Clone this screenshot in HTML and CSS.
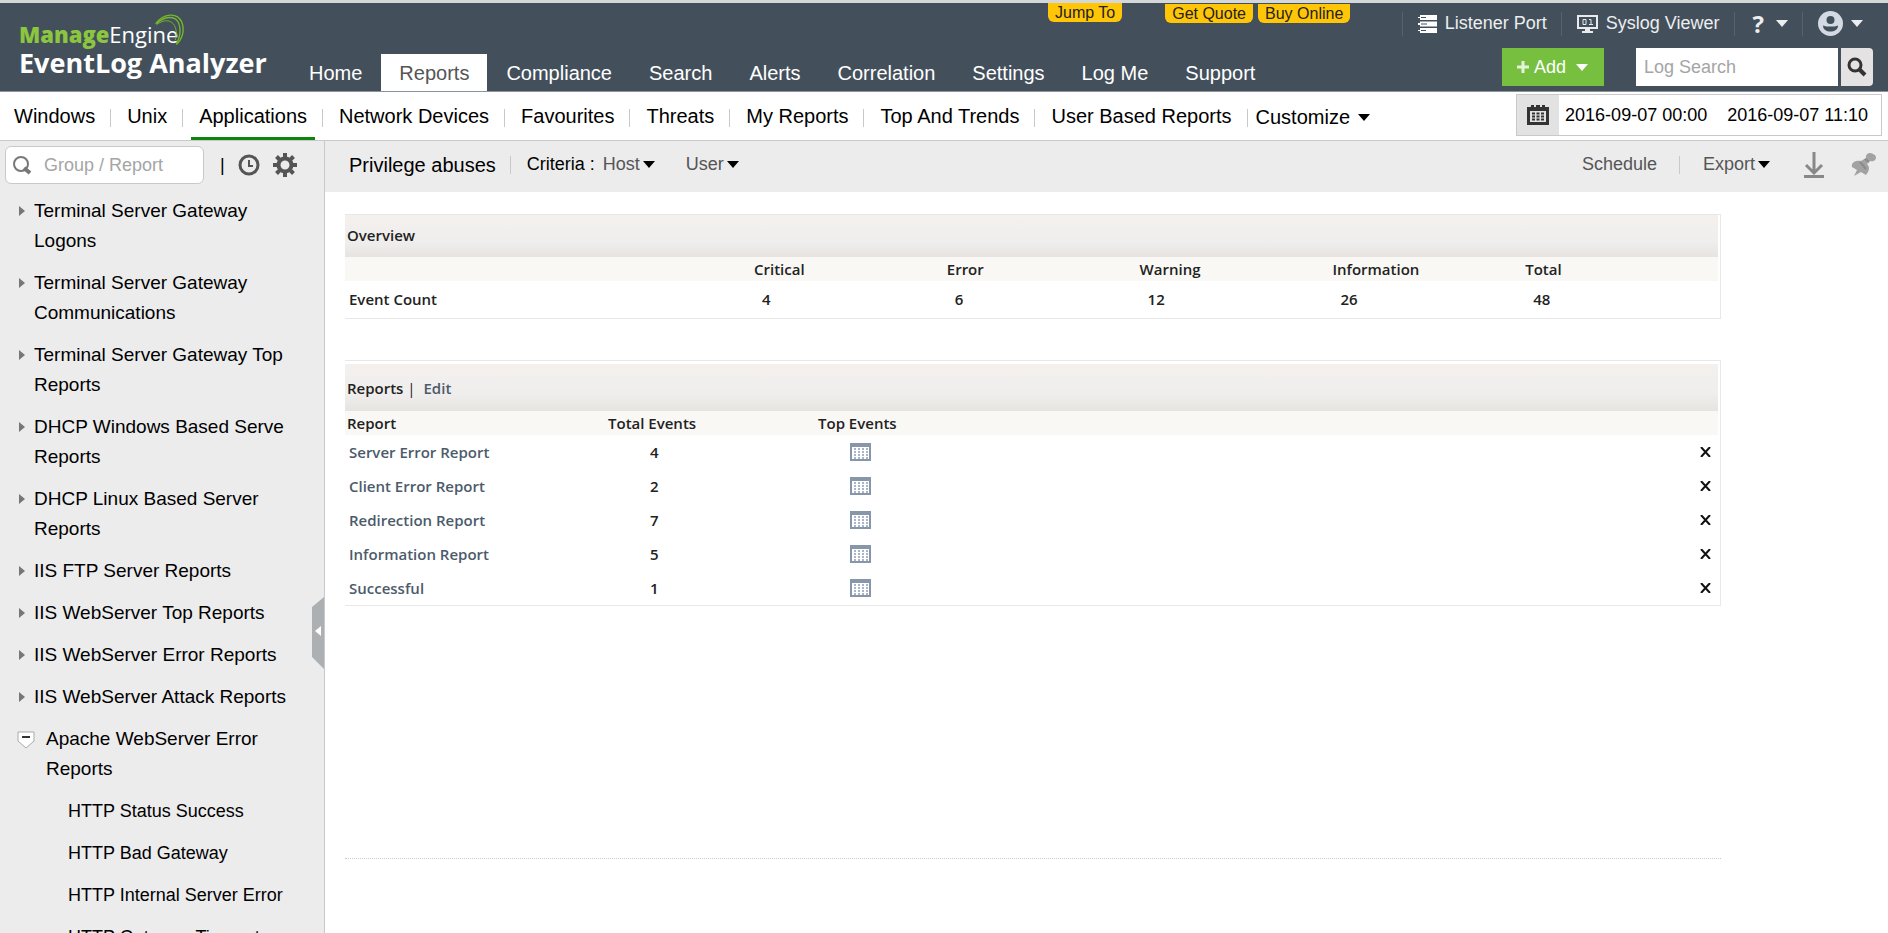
FILE: index.html
```html
<!DOCTYPE html>
<html lang="en">
<head>
    <meta charset="UTF-8">
    <meta name="viewport" content="width=device-width, initial-scale=1.0">
    <title>ManageEngine EventLog Analyzer</title>
    <link rel="stylesheet" href="styles.css">
</head>
<body>
    <header class="header">
        <div class="logo">
            <div class="logo-brand"><span>Manage</span>Engine
                <svg class="logo-arc" viewBox="0 0 34 40" aria-hidden="true">
                    <path d="M1 12C10 0 25-1 30 10c4 10 0 20-6 25" fill="none" stroke="#76b82a" stroke-width="1.500"/>
                    <path d="M2 12C11 3 22 3 26 10c4 8 2 18-2 24" fill="none" stroke="#76b82a" stroke-width="1.500"/>
                    <path d="M2 13c8-6 16-6 20 1 3 6 2 11 1 16" fill="none" stroke="#76b82a" stroke-width="1"/>
                </svg>
            </div>
            <div class="logo-product">EventLog Analyzer</div>
        </div>

        <nav class="main-nav">
            <a href="#">Home</a>
            <a href="#" class="active">Reports</a>
            <a href="#">Compliance</a>
            <a href="#">Search</a>
            <a href="#">Alerts</a>
            <a href="#">Correlation</a>
            <a href="#">Settings</a>
            <a href="#">Log Me</a>
            <a href="#">Support</a>
        </nav>

        <div class="promo">
            <button class="jump">Jump To</button>
            <button>Get Quote</button>
            <button>Buy Online</button>
        </div>

        <div class="header-right">
            <div class="tools">
                <a href="#">
                    <svg width="19" height="18" viewBox="0 0 19 18" aria-hidden="true">
                        <path d="M2 0h17v5H2V3H0V2h2zM2 6.500h17v5H2v-1.500H0V8h2zM2 13h17v5H2v-2H0v-1h2z" fill="#fff"/>
                        <path d="M3 2.500h5M3 9h6M3 15.500h5" stroke="#43505c"/>
                    </svg>
                    Listener Port
                </a>
                <a href="#">
                    <svg width="21" height="18" viewBox="0 0 21 18" aria-hidden="true">
                        <path d="M1 1h19v12H1z" fill="none" stroke="#e8eaec" stroke-width="2"/>
                        <path d="M8 13h5v3h3v2H5v-2h3z" fill="#e8eaec"/>
                        <path d="M6 4.500h3v5H6zM12 4.500h2v5M12 9.500h4" fill="none" stroke="#e8eaec"/>
                    </svg>
                    Syslog Viewer
                </a>
                <button class="help" aria-label="Help">?<i class="caret"></i></button>
                <button class="user" aria-label="Account">
                    <svg width="25" height="25" viewBox="0 0 25 25" aria-hidden="true">
                        <circle cx="12.500" cy="12.500" r="12.500" fill="#d3dae3"/>
                        <circle cx="12.500" cy="9" r="4" fill="#43505c"/>
                        <path d="M5 14.500c2 1 5 1 7.500 1s5.500 0 7.500-1c0 4-3.500 6-7.500 6s-7.500-2-7.500-6z" fill="#43505c"/>
                    </svg>
                    <i class="caret"></i>
                </button>
            </div>
            <div class="actions">
                <button class="add-btn"><svg width="12" height="12" viewBox="0 0 12 12" aria-hidden="true"><path d="M6 0v12M0 6h12" stroke="#e6f3dc" stroke-width="3"/></svg>Add<i class="caret"></i></button>
                <form class="log-search">
                    <input type="text" placeholder="Log Search" aria-label="Log Search">
                    <button type="button" aria-label="Search">
                        <svg width="20" height="20" viewBox="0 0 20 20" aria-hidden="true"><circle cx="8" cy="8" r="6" fill="none" stroke="#333" stroke-width="3"/><path d="M12 12l6 6" stroke="#333" stroke-width="4"/></svg>
                    </button>
                </form>
            </div>
        </div>
    </header>

    <div class="sub-nav">
        <nav>
            <a href="#">Windows</a>
            <a href="#">Unix</a>
            <a href="#" class="active">Applications</a>
            <a href="#">Network Devices</a>
            <a href="#">Favourites</a>
            <a href="#">Threats</a>
            <a href="#">My Reports</a>
            <a href="#">Top And Trends</a>
            <a href="#">User Based Reports</a>
            <button class="customize">Customize<i class="caret"></i></button>
        </nav>
        <div class="date-range">
            <button aria-label="Calendar">
                <svg width="22" height="20" viewBox="0 0 22 20" aria-hidden="true">
                    <path d="M0 2h4V0h3v2h2V0h4v2h2V0h3v2h4v18H0z" fill="#333"/>
                    <path d="M3 6h16v11H3z" fill="#e2e2e2"/>
                    <path d="M5 8.500h12M5 11.500h12M5 14.500h12" stroke="#333" stroke-width="2" stroke-dasharray="3 1.500"/>
                </svg>
            </button>
            <span>2016-09-07 00:00</span>
            <span>2016-09-07 11:10</span>
        </div>
    </div>

    <div class="layout">
        <aside class="sidebar">
            <div class="sidebar-tools">
                <label class="group-search">
                    <svg width="19" height="20" viewBox="0 0 19 20" aria-hidden="true"><circle cx="8" cy="9" r="7" fill="none" stroke="#777" stroke-width="2"/><path d="M11 13l6 5" stroke="#777" stroke-width="4"/></svg>
                    <input type="text" placeholder="Group / Report" aria-label="Group / Report">
                </label>
                <span class="bar">|</span>
                <button aria-label="Schedules">
                    <svg width="22" height="22" viewBox="0 0 22 22" aria-hidden="true"><circle cx="11" cy="11" r="9" fill="none" stroke="#555" stroke-width="3"/><path d="M11 6v6h4" fill="none" stroke="#555" stroke-width="2"/></svg>
                </button>
                <button aria-label="Manage reports">
                    <svg width="24" height="24" viewBox="0 0 24 24" aria-hidden="true"><circle cx="12" cy="12" r="6.500" fill="none" stroke="#555" stroke-width="4"/><path d="M12 0v4M12 20v4M0 12h4M20 12h4M3.500 3.500l3 3M17.500 17.500l3 3M3.500 20.500l3-3M17.500 6.500l3-3" stroke="#555" stroke-width="4"/></svg>
                </button>
            </div>
            <ul class="tree">
                <li><a href="#">Terminal Server Gateway Logons</a></li>
                <li><a href="#">Terminal Server Gateway Communications</a></li>
                <li><a href="#">Terminal Server Gateway Top Reports</a></li>
                <li><a href="#">DHCP Windows Based Serve Reports</a></li>
                <li><a href="#">DHCP Linux Based Server Reports</a></li>
                <li><a href="#">IIS FTP Server Reports</a></li>
                <li><a href="#">IIS WebServer Top Reports</a></li>
                <li><a href="#">IIS WebServer Error Reports</a></li>
                <li><a href="#">IIS WebServer Attack Reports</a></li>
                <li class="open">
                    <svg width="18" height="18" viewBox="0 0 18 18" aria-hidden="true"><path d="M1 1h16v9l-8 7-8-7z" fill="#fff" stroke="#aaa"/><path d="M5 6h8" stroke="#333" stroke-width="2"/></svg>
                    <a href="#">Apache WebServer Error Reports</a>
                    <ul>
                        <li><a href="#">HTTP Status Success</a></li>
                        <li><a href="#">HTTP Bad Gateway</a></li>
                        <li><a href="#">HTTP Internal Server Error</a></li>
                        <li><a href="#">HTTP Gateway Timeout</a></li>
                    </ul>
                </li>
            </ul>
            <button class="collapse" aria-label="Collapse sidebar">
                <svg width="12" height="72" viewBox="0 0 12 72" aria-hidden="true"><path d="M12 0v72L0 60V10z" fill="#adb0b3"/><path d="M9 29v10l-6-5z" fill="#fff"/></svg>
            </button>
        </aside>

        <main class="content">
            <div class="toolbar">
                <h1>Privilege abuses</h1>
                <span class="criteria">Criteria :</span>
                <button>Host<i class="caret"></i></button>
                <button class="by-user">User<i class="caret"></i></button>
                <div class="toolbar-right">
                    <button class="schedule">Schedule</button>
                    <button class="export">Export<i class="caret"></i></button>
                    <button aria-label="Download">
                        <svg width="22" height="26" viewBox="0 0 22 26" aria-hidden="true"><path d="M11 0v21M3 13l8 8 8-8M1 24.500h20" fill="none" stroke="#888" stroke-width="3"/></svg>
                    </button>
                    <button aria-label="Pin">
                        <svg width="26" height="26" viewBox="0 0 26 26" aria-hidden="true">
                            <path d="M15 4c1-3 4-4 7-2 3 1 4 4 2 6-2 2-4 1-5 1l-3 3c3 3 2 6 1 8l-2 3-5-3-7 4 3-6-5-3c-1-4 3-7 9-6l5-3z" fill="#a2a2a2"/>
                            <path d="M14 7l4 3M9 10l6 7" fill="none" stroke="#8a8a8a" stroke-width="2"/>
                        </svg>
                    </button>
                </div>
            </div>

            <div class="report-body">
                <section class="panel overview">
                    <h2>Overview</h2>
                    <table>
                        <thead>
                            <tr><th></th><th>Critical</th><th>Error</th><th>Warning</th><th>Information</th><th>Total</th></tr>
                        </thead>
                        <tbody>
                            <tr><th>Event Count</th><td>4</td><td>6</td><td>12</td><td>26</td><td>48</td></tr>
                        </tbody>
                    </table>
                </section>

                <section class="panel reports">
                    <h2>Reports <span>|</span> <a href="#">Edit</a></h2>
                    <table>
                        <thead>
                            <tr><th>Report</th><th>Total Events</th><th>Top Events</th><th></th></tr>
                        </thead>
                        <tbody>
                            <tr>
                                <td><a href="#">Server Error Report</a></td><td>4</td>
                                <td><a href="#" aria-label="Top events"><svg class="grid-icon" viewBox="0 0 21 18"><use href="#grid"/></svg></a></td>
                                <td><button aria-label="Remove"><svg width="11" height="10" viewBox="0 0 11 10"><use href="#cross"/></svg></button></td>
                            </tr>
                            <tr>
                                <td><a href="#">Client Error Report</a></td><td>2</td>
                                <td><a href="#" aria-label="Top events"><svg class="grid-icon" viewBox="0 0 21 18"><use href="#grid"/></svg></a></td>
                                <td><button aria-label="Remove"><svg width="11" height="10" viewBox="0 0 11 10"><use href="#cross"/></svg></button></td>
                            </tr>
                            <tr>
                                <td><a href="#">Redirection Report</a></td><td>7</td>
                                <td><a href="#" aria-label="Top events"><svg class="grid-icon" viewBox="0 0 21 18"><use href="#grid"/></svg></a></td>
                                <td><button aria-label="Remove"><svg width="11" height="10" viewBox="0 0 11 10"><use href="#cross"/></svg></button></td>
                            </tr>
                            <tr>
                                <td><a href="#">Information Report</a></td><td>5</td>
                                <td><a href="#" aria-label="Top events"><svg class="grid-icon" viewBox="0 0 21 18"><use href="#grid"/></svg></a></td>
                                <td><button aria-label="Remove"><svg width="11" height="10" viewBox="0 0 11 10"><use href="#cross"/></svg></button></td>
                            </tr>
                            <tr>
                                <td><a href="#">Successful</a></td><td>1</td>
                                <td><a href="#" aria-label="Top events"><svg class="grid-icon" viewBox="0 0 21 18"><use href="#grid"/></svg></a></td>
                                <td><button aria-label="Remove"><svg width="11" height="10" viewBox="0 0 11 10"><use href="#cross"/></svg></button></td>
                            </tr>
                        </tbody>
                    </table>
                </section>
            </div>
        </main>
    </div>

    <!-- shared row icons -->
    <svg class="symbols" aria-hidden="true">
        <symbol id="grid" viewBox="0 0 21 18">
            <path d="M1 1h19v16H1z" fill="#fff" stroke="#8796a8" stroke-width="2"/>
            <path d="M1 2.500h19" stroke="#8796a8" stroke-width="3"/>
            <path d="M5 5v11M9 5v11M13 5v11M17 5v11" stroke="#a9b5c3" stroke-width="2" stroke-dasharray="2 1"/>
        </symbol>
        <symbol id="cross" viewBox="0 0 11 10">
            <path d="M1 0l9 10M10 0L1 10" stroke="#111" stroke-width="2"/>
        </symbol>
    </svg>
</body>
</html>
```
FILE: styles.css
```css
:root {
    --header-bg: #43505c;
    --panel-grey: #ececed;
    --line: #c9c9c9;
    --green: #76bf3f;
    --yellow: #ffc507;
    --text-muted: #555;
    --link: #4c5b6b;
}

* {
    box-sizing: border-box;
    margin: 0;
    padding: 0;
}

body {
    height: 100vh;
    display: flex;
    flex-direction: column;
    overflow: hidden;
    font-family: "Liberation Sans", Arial, sans-serif;
    font-size: 18px;
    color: #000;
    background: #fff;
}

a {
    color: inherit;
    text-decoration: none;
}

button {
    border: none;
    background: none;
    font: inherit;
    color: inherit;
    cursor: pointer;
    display: flex;
    align-items: center;
    white-space: nowrap;
}

input {
    font: inherit;
    border: none;
    outline: none;
    min-width: 0;
}

ul {
    list-style: none;
}

svg {
    display: block;
    flex: none;
}

.caret {
    flex: none;
    border: 6px solid transparent;
    border-top: 7px solid currentColor;
    border-bottom: none;
}

/* Header */
.header {
    display: flex;
    flex: none;
    height: 92px;
    background: var(--header-bg);
    border-top: 3px solid #d5d8d8;
    border-bottom: 1px solid #8b949b;
    color: #fff;
}

.logo {
    width: 291px;
    padding: 17px 0 0 19px;
    font-family: "Open Sans", sans-serif;
}

.logo-brand {
    display: flex;
    font-size: 22px;
    line-height: 28px;
    position: relative;
    width: max-content;
}

.logo-brand span {
    color: #8cc63f;
    font-weight: 800;
}

.logo-arc {
    position: absolute;
    right: -9px;
    top: -7px;
    width: 34px;
    height: 36px;
}

.logo-product {
    font-size: 27px;
    font-weight: 700;
    line-height: 30px;
    white-space: nowrap;
}

.main-nav {
    display: flex;
    align-items: flex-end;
    gap: 1px;
}

.main-nav a {
    height: 37px;
    padding: 0 18px;
    font-size: 20px;
    line-height: 38px;
    white-space: nowrap;
}

.main-nav .active {
    background: #fff;
    color: var(--text-muted);
}

/* yellow tabs hang over the top edge of the header */
.promo {
    display: flex;
    gap: 5px;
    position: absolute;
    top: 3px;
    left: 1048px;
}

.promo button {
    height: 19px;
    margin-top: 1px;
    padding: 0 7px;
    background: var(--yellow);
    border-radius: 0 0 6px 6px;
    color: #222;
    font-size: 16px;
}

.promo .jump {
    margin: 0 38px 0 0;
}

.header-right {
    margin-left: auto;
    padding: 6px 15px 0 0;
    display: flex;
    flex-direction: column;
    align-items: flex-end;
    gap: 10px;
}

.tools {
    display: flex;
    align-items: center;
    height: 29px;
    color: #eceeef;
}

.tools > * {
    display: flex;
    align-items: center;
    height: 24px;
    gap: 8px;
    padding: 0 14px 0 15px;
    border-left: 1px solid #56636f;
    white-space: nowrap;
}

.tools .help {
    padding-left: 18px;
    gap: 12px;
    font-family: "Open Sans", sans-serif;
    font-size: 24px;
    font-weight: 700;
}

.tools .user {
    padding-right: 10px;
}

.actions {
    display: flex;
    gap: 32px;
    height: 38px;
}

.add-btn {
    gap: 5px;
    padding: 0 16px 0 15px;
    background: var(--green);
}

.add-btn .caret {
    margin-left: 5px;
}

.log-search {
    display: flex;
    gap: 3px;
}

.log-search input {
    width: 202px;
    padding: 0 8px;
}

input::placeholder {
    color: #a5a5a5;
    opacity: 1;
}

.log-search button {
    width: 32px;
    justify-content: center;
    background: #e4e2e3;
    border-radius: 0 4px 4px 0;
}

/* Second level navigation */
.sub-nav {
    display: flex;
    flex: none;
    justify-content: space-between;
    height: 49px;
    border-bottom: 1px solid var(--line);
}

.sub-nav nav {
    display: flex;
    align-items: center;
    font-size: 20px;
    white-space: nowrap;
}

.sub-nav nav a {
    position: relative;
    height: 48px;
    padding: 0 8px;
    margin-right: 16px;
    line-height: 49px;
}

.sub-nav nav a:first-child {
    margin-left: 6px;
}

.sub-nav nav a::after {
    content: '';
    position: absolute;
    top: 17px;
    right: -8px;
    height: 18px;
    border-right: 1px solid var(--line);
}

.sub-nav nav .active {
    border-bottom: 3px solid #0b860b;
}

.customize {
    gap: 8px;
    padding-top: 3px;
}

.date-range {
    display: flex;
    align-items: center;
    height: 42px;
    margin: 2px 6px 0 0;
    padding-right: 13px;
    gap: 20px;
    border: 1px solid var(--line);
}

.date-range button {
    width: 42px;
    height: 40px;
    margin-right: -14px;
    justify-content: center;
    background: #e2e2e2;
}

/* Layout */
.layout {
    display: flex;
    flex: 1;
    min-height: 0;
}

.sidebar {
    position: relative;
    flex: none;
    width: 325px;
    background: var(--panel-grey);
    border-right: 1px solid var(--line);
    overflow: hidden;
}

.sidebar-tools {
    display: flex;
    align-items: center;
    gap: 13px;
    padding: 5px 0 0 5px;
}

.group-search {
    display: flex;
    align-items: center;
    gap: 12px;
    width: 199px;
    height: 38px;
    padding: 0 7px;
    background: #fff;
    border: 1px solid var(--line);
    border-radius: 6px;
}

.group-search input {
    flex: 1;
}

.bar {
    margin-left: 3px;
}

.tree {
    width: 291px;
    padding-top: 12px;
    font-size: 19px;
    line-height: 30px;
}

.tree > li {
    position: relative;
    margin-bottom: 12px;
    padding-left: 34px;
}

.tree > li::before {
    content: '';
    position: absolute;
    left: 19px;
    top: 10px;
    border: 5px solid transparent;
    border-left: 6px solid #777;
    border-right: none;
}

.tree > .open {
    padding-left: 46px;
}

.tree > .open::before {
    display: none;
}

.open > svg {
    position: absolute;
    left: 17px;
    top: 7px;
}

.open ul {
    padding: 12px 0 0 22px;
    font-size: 18px;
}

.open ul li {
    margin-bottom: 12px;
    white-space: nowrap;
}

.collapse {
    position: absolute;
    right: 0;
    top: 456px;
}

.content {
    flex: 1;
    min-width: 0;
}

.toolbar {
    display: flex;
    align-items: center;
    height: 51px;
    padding: 0 11px 4px 24px;
    background: var(--panel-grey);
    color: var(--text-muted);
}

.toolbar h1 {
    padding-right: 14px;
    border-right: 1px solid var(--line);
    color: #000;
    font-size: 20px;
    font-weight: 400;
    line-height: 18px;
    white-space: nowrap;
}

.toolbar button {
    gap: 3px;
}

.toolbar .caret {
    border-top-color: #000;
}

.criteria {
    margin: 0 8px 0 16px;
    color: #000;
    white-space: nowrap;
}

.by-user {
    margin-left: 31px;
}

.toolbar-right {
    display: flex;
    align-items: center;
    margin-left: auto;
}

.schedule {
    height: 18px;
    padding-right: 22px;
    border-right: 1px solid var(--line);
}

.export {
    margin: 0 33px 0 23px;
}

.toolbar-right button:last-child {
    margin-left: 26px;
}

/* Report panels */
.report-body {
    min-height: 667px;
    margin: 0 167px 0 20px;
    padding-top: 22px;
    border-bottom: 1px dotted var(--line);
    font-family: "Open Sans", sans-serif;
    font-size: 15px;
    font-weight: 600;
    color: #222;
}

.panel {
    border: 1px solid #e8e8e8;
    border-left: none;
    padding-right: 2px;
}

.panel h2 {
    height: 42px;
    padding-left: 2px;
    background: linear-gradient(#f3f0ee, #f0eeec 65%, #e6e3e1);
    font-size: 15px;
    font-weight: 600;
    line-height: 40px;
}

.panel h2 span {
    margin: 0 4px 0 0;
    font-weight: 400;
}

.panel a {
    color: var(--link);
}

.panel table {
    width: 100%;
    border-collapse: collapse;
    table-layout: fixed;
}

.panel th {
    font-weight: 600;
    text-align: left;
}

.panel thead th {
    height: 24px;
    background: #f9f8f5;
}

.overview {
    padding-bottom: 2px;
}

.overview tbody tr {
    height: 35px;
}

.overview th:first-child {
    width: 409px;
    padding-left: 4px;
}

.overview td {
    padding-left: 8px;
}

.reports {
    margin-top: 41px;
    padding-top: 3px;
}

.reports h2 {
    height: 47px;
    line-height: 49px;
}

.reports tbody tr {
    height: 34px;
}

.reports th:first-child {
    width: 220px;
    padding-left: 2px;
}

.reports td:first-child {
    padding-left: 4px;
}

.reports th:nth-child(2) {
    width: 176px;
    padding-left: 43px;
}

.reports th:nth-child(3) {
    width: 264px;
    padding-left: 77px;
}

.reports td:nth-child(2) {
    padding-left: 85px;
}

.reports td:nth-child(3) {
    padding-left: 109px;
}

.reports td:last-child button {
    margin: 0 7px 0 auto;
}

.grid-icon {
    width: 21px;
    height: 18px;
}

.symbols {
    position: absolute;
    width: 0;
    height: 0;
}
```
